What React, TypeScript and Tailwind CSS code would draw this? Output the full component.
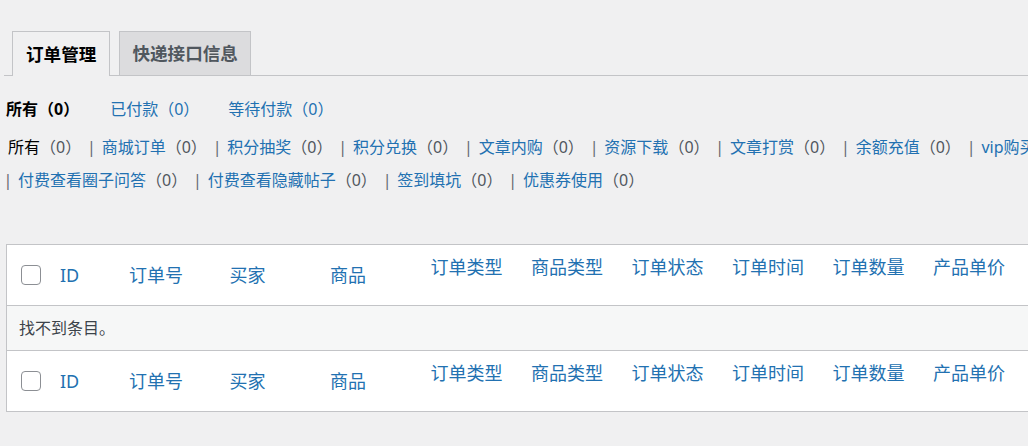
import React from "react";

const font = { fontFamily: '"Noto Sans", "Noto Sans CJK SC", sans-serif' };

function Sep({ first = false }: { first?: boolean }) {
  return (
    <span
      className={
        first
          ? "inline-flex w-[16px] shrink-0 justify-center mr-[2px] text-[#646970]"
          : "inline-flex w-[20.5px] shrink-0 justify-center text-[#646970]"
      }
    >
      |
    </span>
  );
}

function Item({ label }: { label: string }) {
  return (
    <span className="shrink-0 whitespace-nowrap">
      <span className="text-[#2271b1]">{label}</span>
      <span className="text-[#50575e]">（0）</span>
    </span>
  );
}

function Checkbox() {
  return <span className="block h-5 w-5 rounded-[4px] border border-[#8c8f94] bg-white" />;
}

const headers: { t: string; top: boolean }[] = [
  { t: "订单号", top: false },
  { t: "买家", top: false },
  { t: "商品", top: false },
  { t: "订单类型", top: true },
  { t: "商品类型", top: true },
  { t: "订单状态", top: true },
  { t: "订单时间", top: true },
  { t: "订单数量", top: true },
  { t: "产品单价", top: true },
  { t: "订单总价", top: true },
];

function HeaderRow({ footer }: { footer: boolean }) {
  return (
    <div
      className={
        "grid h-[61px] grid-cols-[43px_69px_repeat(10,100.5px)] " +
        (footer ? "border-t border-[#c3c4c7]" : "border-b border-[#c3c4c7]")
      }
    >
      <div className="flex items-center pl-[14px]">
        <Checkbox />
      </div>
      <div className="flex items-center pl-[10px] text-[18px] leading-[27px] text-[#2271b1]">ID</div>
      {headers.map((h) => (
        <div
          key={h.t}
          className={
            "flex whitespace-nowrap pl-[10px] text-[18px] leading-[27px] text-[#2271b1] " +
            (h.top ? "items-start pt-[9px]" : "items-center")
          }
        >
          {h.t}
        </div>
      ))}
    </div>
  );
}

export default function App() {
  return (
    <div className="h-[446px] w-[1028px] overflow-hidden bg-[#f0f0f1]" style={font}>
      {/* Tabs */}
      <div className="ml-[4px] flex border-b border-[#c3c4c7] pt-[31px]">
        <div className="-mb-px ml-[8px] flex h-[45px] items-center border border-b-0 border-[#c3c4c7] bg-[#f0f0f1] px-[13px] text-[17.6px] font-bold text-[#000]">
          订单管理
        </div>
        <div className="ml-[9px] flex h-[44px] items-center border border-b-0 border-[#c3c4c7] bg-[#dcdcde] px-[12px] text-[17.6px] font-bold text-[#50575e]">
          快递接口信息
        </div>
      </div>

      {/* Status line */}
      <div className="mt-[17px] flex gap-[29px] pl-[6px] text-[16px] leading-[32px]">
        <span className="font-bold text-black">所有（0）</span>
        <span className="ml-[2px] text-[#2271b1]">已付款（0）</span>
        <span className="text-[#2271b1]">等待付款（0）</span>
      </div>

      {/* Types */}
      <div className="mt-[6px] flex whitespace-nowrap pl-[8px] text-[16px] leading-[33px]">
        <span className="shrink-0 whitespace-nowrap">
          <span className="text-black">所有</span>
          <span className="text-[#50575e]">（0）</span>
        </span>
        <Sep />
        <Item label="商城订单" />
        <Sep />
        <Item label="积分抽奖" />
        <Sep />
        <Item label="积分兑换" />
        <Sep />
        <Item label="文章内购" />
        <Sep />
        <Item label="资源下载" />
        <Sep />
        <Item label="文章打赏" />
        <Sep />
        <Item label="余额充值" />
        <Sep />
        <Item label="vip购买" />
      </div>
      <div className="flex whitespace-nowrap text-[16px] leading-[33px]">
        <Sep first />
        <Item label="付费查看圈子问答" />
        <Sep />
        <Item label="付费查看隐藏帖子" />
        <Sep />
        <Item label="签到填坑" />
        <Sep />
        <Item label="优惠券使用" />
      </div>

      {/* Table */}
      <div className="ml-[6px] mt-[47px] w-[1130px] border border-[#c3c4c7] bg-white">
        <HeaderRow footer={false} />
        <div className="flex h-[44px] items-center bg-[#f6f7f7] pl-[12px] text-[16px] text-[#3c434a]">
          找不到条目。
        </div>
        <HeaderRow footer />
      </div>
    </div>
  );
}
